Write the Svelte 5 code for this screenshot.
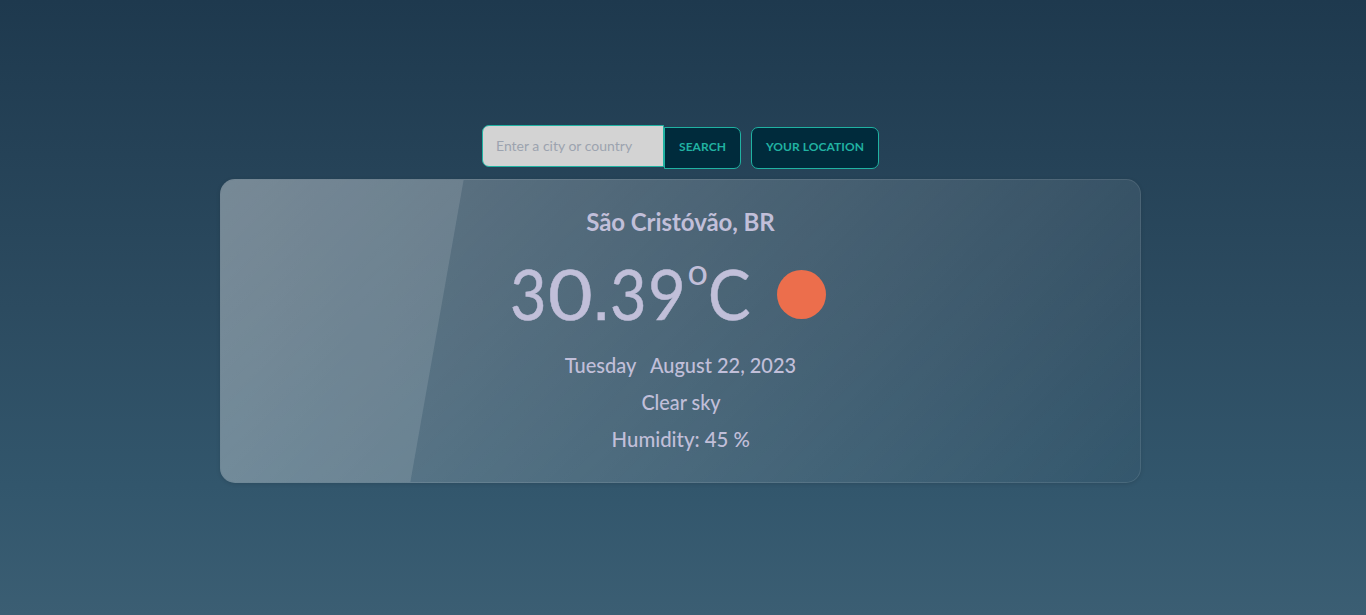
<script>
  const weather = {
    city: 'São Cristóvão, BR',
    whole: '30',
    fraction: ['3', '9'],
    day: 'Tuesday',
    date: 'August 22, 2023',
    description: 'Clear sky',
    humidity: 45
  };
  let query = $state('');
</script>

<main>
  <form onsubmit={(event) => event.preventDefault()}>
    <input type="text" placeholder="Enter a city or country" bind:value={query} />
    <button class="search" type="submit">SEARCH</button>
    <button class="location" type="button">YOUR LOCATION</button>
  </form>

  <section>
    <h1>{weather.city}</h1>
    <div class="current">
      <span class="temperature"><span class="three">{weather.whole[0]}</span><span class="zero">{weather.whole[1]}</span><span class="point">.</span><span class="three">{weather.fraction[0]}</span><span class="nine">{weather.fraction[1]}</span><span class="degree">o</span><span class="unit">C</span></span>
      <svg width="50" height="50" viewBox="0 0 50 50" aria-hidden="true">
        <circle cx="24.5" cy="25.5" r="24.5" fill="#ec6e4c" />
      </svg>
    </div>
    <p class="when"><span class="day">{weather.day}</span><span class="date">{weather.date}</span></p>
    <p class="sky">{weather.description}</p>
    <p class="humidity">Humidity: {weather.humidity} %</p>
  </section>
</main>

<style>
  :global(body) {
    margin: 0;
  }
  main {
    box-sizing: border-box;
    height: 615px;
    padding: 125px 5px 0 0;
    display: flex;
    flex-direction: column;
    align-items: center;
    overflow: hidden;
    font-family: Lato, sans-serif;
    background: linear-gradient(#1e394e, #2c4b60 50%, #32566c 79%, #3b5e73);
  }
  form {
    display: flex;
    height: 54px;
    align-items: flex-start;
  }
  input,
  button {
    box-sizing: border-box;
    height: 42px;
    margin: 0;
    border: 1px solid #20b2a2;
    font-family: Lato, sans-serif;
  }
  input {
    width: 182px;
    padding: 0 13px 2px;
    border-radius: 7px 0 0 7px;
    background: #d3d3d3;
    color: #34495e;
    font-size: 14px;
    outline: none;
  }
  input::placeholder {
    color: #9ca3af;
    opacity: 1;
  }
  button {
    margin-top: 2px;
    padding: 0 0 3px;
    background: #002b3c;
    color: #20b2a2;
    font-size: 12px;
    font-weight: 700;
    letter-spacing: 0.06px;
    white-space: nowrap;
  }
  .search {
    width: 77px;
    border-radius: 0 7px 7px 0;
  }
  .location {
    width: 128px;
    margin-left: 10px;
    border-radius: 7px;
  }
  section {
    position: relative;
    box-sizing: border-box;
    width: 921px;
    height: 304px;
    display: flex;
    flex-direction: column;
    align-items: center;
    overflow: hidden;
    border: 1px solid rgba(255, 255, 255, 0.1);
    border-radius: 15px;
    background: linear-gradient(135deg, rgba(255, 255, 255, 0.29), rgba(255, 255, 255, 0.01)) border-box;
    box-shadow: 0 1px 4px rgba(0, 0, 0, 0.12);
    color: #c1bfd9;
  }
  section::before {
    content: '';
    position: absolute;
    top: 0;
    left: -245px;
    width: 460.5px;
    height: 100%;
    transform: skewX(-10deg);
    background: rgba(255, 255, 255, 0.12);
  }
  h1 {
    margin: 27px 0 0;
    font-size: 24px;
    line-height: 30px;
    font-weight: 700;
    letter-spacing: -0.06px;
    white-space: nowrap;
  }
  .current {
    display: flex;
    height: 84px;
    margin-top: 15px;
    width: 338px;
    align-items: center;
    justify-content: space-between;
  }
  .temperature {
    display: flex;
    align-items: baseline;
    margin: 0 0 3px -2px;
    height: 84px;
    font-size: 70px;
    line-height: 84px;
    -webkit-text-stroke: 0.5px #c1bfd9;
    white-space: nowrap;
  }
  .temperature span {
    display: block;
    transform-origin: left;
  }
  .three {
    width: 38px;
    transform: scaleX(0.9);
  }
  .zero {
    width: 44px;
    transform: scaleX(1.1);
  }
  .point {
    width: 18px;
    font-family: "Liberation Sans", sans-serif;
  }
  .nine {
    width: 40px;
    transform: scaleX(0.93);
  }
  .degree {
    position: relative;
    top: -35px;
    width: 20px;
    font-size: 36px;
    -webkit-text-stroke: 0;
  }
  .unit {
    width: 42px;
    transform: scaleX(0.91);
  }
  svg {
    margin-right: 23px;
  }
  p {
    margin: 0;
    font-size: 22px;
    line-height: 37px;
    font-weight: 500;
    white-space: nowrap;
  }
  .when {
    display: flex;
    gap: 15px;
    margin-top: 10px;
    transform: scaleX(0.908);
  }
  .sky {
    transform: scaleX(0.9);
  }
  .humidity {
    transform: scaleX(0.925);
  }
</style>
